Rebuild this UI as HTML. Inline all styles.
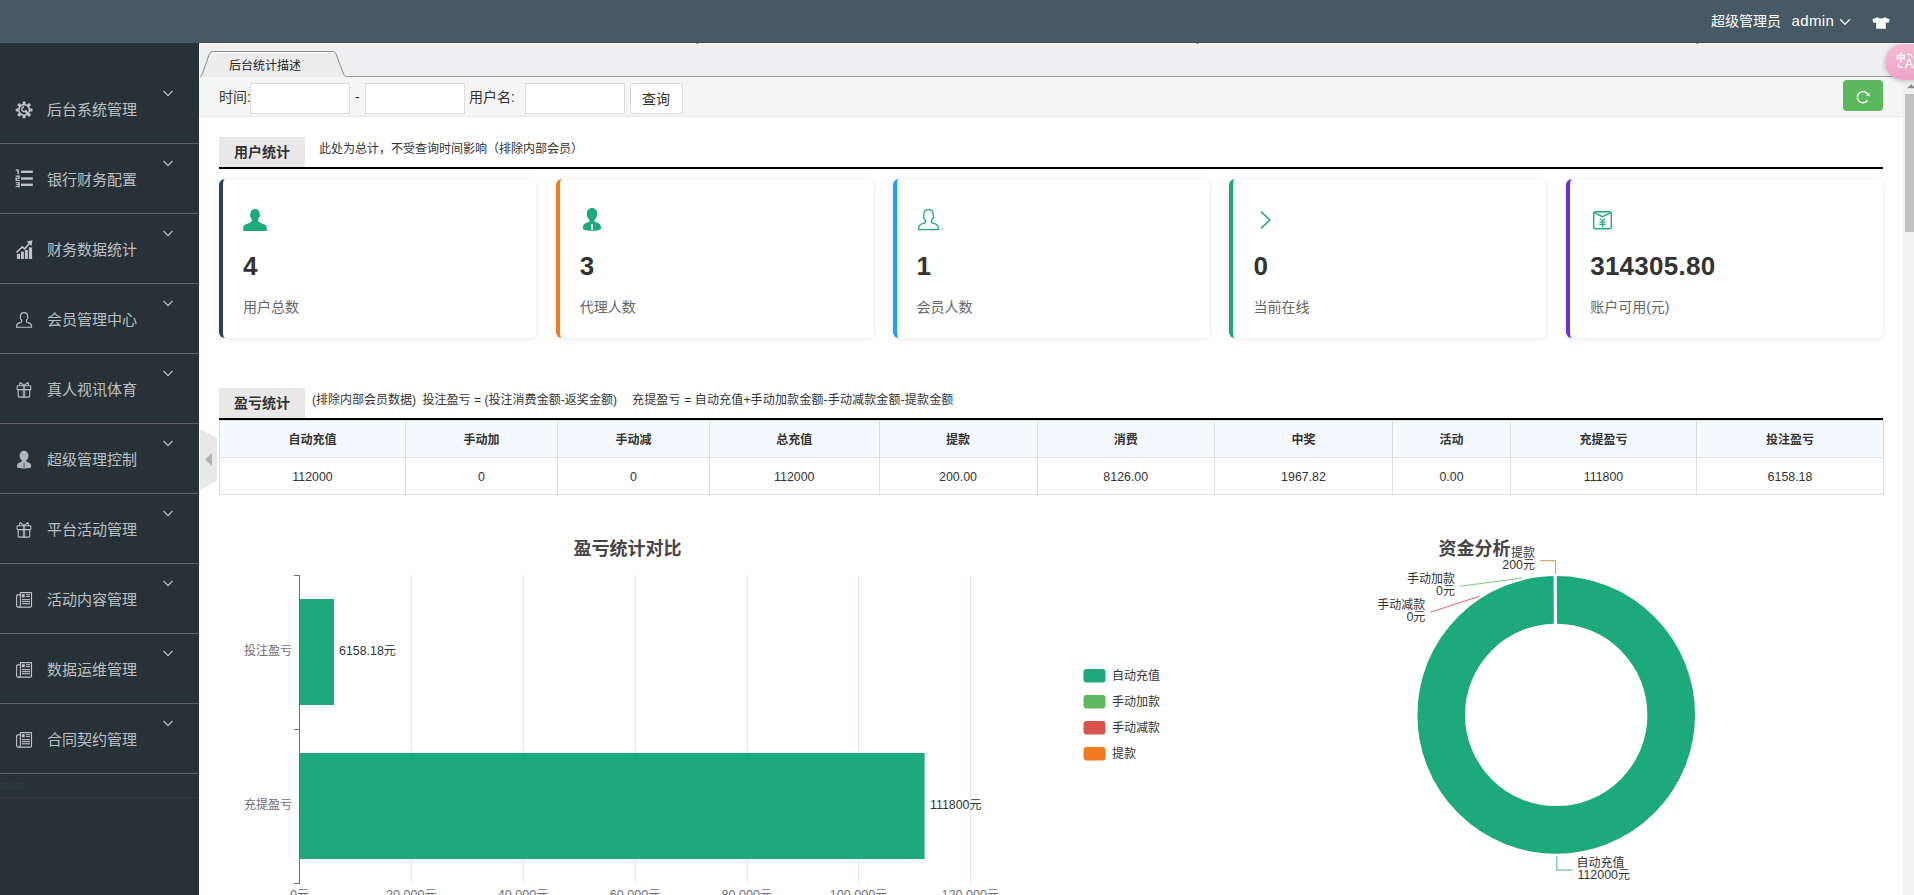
<!DOCTYPE html>
<html lang="zh-CN">
<head>
<meta charset="utf-8">
<title>后台统计描述</title>
<style>
*{box-sizing:border-box;margin:0;padding:0}
html,body{width:1914px;height:895px;overflow:hidden;background:#fff}
body{position:relative;font-family:"Liberation Sans","Noto Sans CJK SC",sans-serif;font-size:14px;color:#333}
.abs{position:absolute}
#header{left:0;top:0;width:1914px;height:43px;background:#455a64}
#side{left:0;top:43px;width:199px;height:852px;background:#263238}
.mi{position:absolute;left:0;width:199px;height:70px;border-bottom:1px solid #626262}
.mi .tx{position:absolute;left:47px;top:25px;font-size:15px;line-height:22px;color:rgba(255,255,255,.7);white-space:nowrap}
.mi svg.ic{position:absolute;left:0;top:0;width:48px;height:70px}
.mi svg.ch{position:absolute;left:162px;top:15px;width:12px;height:9px}
#tabbar{left:199px;top:43px;width:1715px;height:34px;background:#efeff1}
#toolbar{left:199px;top:77px;width:1705px;height:40px;background:#f5f5f5;border-bottom:1px solid #e6e6e6}
.inp{position:absolute;top:83px;width:100px;height:31px;background:#fff;border:1px solid #ddd}
.lbl{position:absolute;font-size:14px;line-height:20px;color:#333;white-space:nowrap}
.sec{position:absolute;left:219px;width:1664px;height:32px;border-bottom:2px solid #000}
.sec .t{position:absolute;left:0;top:0;width:86px;height:30px;background:#e8e8e8;font-weight:bold;font-size:14px;line-height:30px;color:#333;text-align:center}
.sec .d{position:absolute;font-size:12px;line-height:16px;color:#333;white-space:pre}
.card{position:absolute;top:179px;width:316.8px;height:159px;background:#fff;border-left:4px solid #2f4056;border-radius:6px;box-shadow:0 1px 6px rgba(0,0,0,.09)}
.card .n{position:absolute;left:20px;top:71px;letter-spacing:.25px;font-size:26px;line-height:32px;font-weight:bold;color:#333;white-space:nowrap}
.card .l{position:absolute;left:20px;top:118px;font-size:14px;line-height:20px;color:#666;white-space:nowrap}
.card svg{position:absolute;left:20px;top:29px;width:24px;height:24px;overflow:visible}
table{position:absolute;left:219px;top:420px;width:1664px;border-collapse:collapse;table-layout:fixed;font-size:12px}
td,th{border:1px solid #ddd;text-align:center;color:#333;height:37px;padding:0}
td{font-size:12.4px;padding-top:2px}
th{background:#f5fafe;font-weight:bold;padding-bottom:2px}
svg text{font-family:"Liberation Sans","Noto Sans CJK SC",sans-serif}
</style>
</head>
<body>
<div id="header" class="abs"></div>
<div class="abs lbl" style="left:1711px;top:11px;color:#fff">超级管理员</div>
<div class="abs lbl" style="left:1791.5px;top:11px;color:#fff;font-size:15px;letter-spacing:.35px">admin</div>
<svg class="abs" style="left:1838px;top:17px" width="14" height="10" viewBox="0 0 14 10"><path d="M2.2 2.2 L7 7.4 L11.8 2.2" fill="none" stroke="#fff" stroke-width="1.3"/></svg>
<svg class="abs" style="left:1871px;top:16px" width="20" height="14" viewBox="0 0 20 14"><path d="M6.2 1.2 L1.2 3.6 L2.6 7 L5.2 6.2 L5.2 12.8 L14.8 12.8 L14.8 6.2 L17.4 7 L18.8 3.6 L13.8 1.2 Q10 3.6 6.2 1.2 Z" fill="#fff"/></svg>
<div id="side" class="abs"></div>
<div class="mi" style="top:74px"><svg class="ic" viewBox="0 0 48 70"><g fill="#bfc3c5"><rect x="22.60" y="27.50" width="3.0" height="3.2" rx="0.6" transform="rotate(0 24.10 35.90)"/><rect x="22.60" y="27.50" width="3.0" height="3.2" rx="0.6" transform="rotate(45 24.10 35.90)"/><rect x="22.60" y="27.50" width="3.0" height="3.2" rx="0.6" transform="rotate(90 24.10 35.90)"/><rect x="22.60" y="27.50" width="3.0" height="3.2" rx="0.6" transform="rotate(135 24.10 35.90)"/><rect x="22.60" y="27.50" width="3.0" height="3.2" rx="0.6" transform="rotate(180 24.10 35.90)"/><rect x="22.60" y="27.50" width="3.0" height="3.2" rx="0.6" transform="rotate(225 24.10 35.90)"/><rect x="22.60" y="27.50" width="3.0" height="3.2" rx="0.6" transform="rotate(270 24.10 35.90)"/><rect x="22.60" y="27.50" width="3.0" height="3.2" rx="0.6" transform="rotate(315 24.10 35.90)"/></g><circle cx="24.10" cy="35.90" r="5.3" fill="none" stroke="#bfc3c5" stroke-width="1.6"/><path d="M24 33 A2.3 2.3 0 1 0 26.300 36" fill="none" stroke="#bfc3c5" stroke-width="1.4"/><path d="M25 36.800 L29.900 41.600" fill="none" stroke="#bfc3c5" stroke-width="2.2"/></svg><span class="tx">后台系统管理</span><svg class="ch" viewBox="0 0 12 9"><path d="M1.6 2 L6 6.6 L10.4 2" fill="none" stroke="#c3c7c9" stroke-width="1.1"/></svg></div>
<div class="mi" style="top:144px"><svg class="ic" viewBox="0 0 48 70"><g fill="#bfc3c5"><rect x="21" y="26.600" width="11.8" height="2.4"/><rect x="21" y="33.300" width="11.8" height="2.4"/><rect x="21" y="39.600" width="11.8" height="2.4"/><rect x="17.3" y="25.4" width="1.600" height="4.6"/><rect x="15.8" y="25.4" width="2" height="1.3"/><rect x="15.6" y="31.5" width="4" height="1.2"/><rect x="18.3" y="31.5" width="1.3" height="2.7"/><rect x="15.600" y="33.600" width="4" height="1.1"/><rect x="15.600" y="33.600" width="1.3" height="2.7"/><rect x="15.600" y="35.800" width="4" height="1.2"/><rect x="15.600" y="38.2" width="4" height="1.1"/><rect x="16.2" y="40.1" width="3.4" height="1.1"/><rect x="15.600" y="42.1" width="4" height="1.1"/><rect x="18.3" y="38.2" width="1.3" height="5"/></g></svg><span class="tx">银行财务配置</span><svg class="ch" viewBox="0 0 12 9"><path d="M1.6 2 L6 6.6 L10.4 2" fill="none" stroke="#c3c7c9" stroke-width="1.1"/></svg></div>
<div class="mi" style="top:214px"><svg class="ic" viewBox="0 0 48 70"><g fill="#bfc3c5"><rect x="16.9" y="39.9" width="3.1" height="5.1"/><rect x="20.9" y="37.600" width="3" height="7.4"/><rect x="24.9" y="35.9" width="3" height="9.1"/><rect x="28.9" y="33.4" width="3.2" height="11.6"/><path d="M32.5 26.2 L26.700 27.5 L28.600 29.300 L24.700 33.800 L22.300 31.800 L15.900 38 L17 39.100 L22.300 34.100 L24.700 36.100 L29.700 30.400 L31.500 32.100 Z"/></g></svg><span class="tx">财务数据统计</span><svg class="ch" viewBox="0 0 12 9"><path d="M1.6 2 L6 6.6 L10.4 2" fill="none" stroke="#c3c7c9" stroke-width="1.1"/></svg></div>
<div class="mi" style="top:284px"><svg class="ic" viewBox="0 0 48 70"><path d="M24.05 28.65 C26.4 28.65 27.6 30.1 27.6 32 C27.6 32.900 27.9 33.200 27.9 33.800 C27.9 34.800 26.3 35.700 26.3 37.1 C26.3 38.300 27.300 38.700 28.500 38.900 C30.600 39.300 31.650 40.900 31.650 43.25 L16.45 43.25 C16.45 40.900 17.500 39.300 19.600 38.900 C20.800 38.700 21.800 38.300 21.800 37.1 C21.800 35.700 20.200 34.800 20.200 33.800 C20.200 33.200 20.500 32.900 20.500 32 C20.500 30.100 21.700 28.65 24.05 28.65 Z" fill="none" stroke="#bfc3c5" stroke-width="1.15" stroke-linejoin="round"/></svg><span class="tx">会员管理中心</span><svg class="ch" viewBox="0 0 12 9"><path d="M1.6 2 L6 6.6 L10.4 2" fill="none" stroke="#c3c7c9" stroke-width="1.1"/></svg></div>
<div class="mi" style="top:354px"><svg class="ic" viewBox="0 0 48 70"><g fill="none" stroke="#bfc3c5" stroke-width="1.1" stroke-linejoin="round"><rect x="17.1" y="31.800" width="13.7" height="3.800" rx="0.7"/><path d="M18.2 35.400 V42 Q18.2 43.100 19.300 43.100 H28.600 Q29.700 43.100 29.700 42 V35.400"/><path d="M23.300 31.600 V43.100 M24.700 31.600 V43.100" stroke-width="0.9"/><path d="M24 31.500 L20 28.500 L19.400 31.400 M24 31.500 L28 28.500 L28.600 31.400"/></g></svg><span class="tx">真人视讯体育</span><svg class="ch" viewBox="0 0 12 9"><path d="M1.6 2 L6 6.6 L10.4 2" fill="none" stroke="#c3c7c9" stroke-width="1.1"/></svg></div>
<div class="mi" style="top:424px"><svg class="ic" viewBox="0 0 48 70"><path d="M24.05 26.7 C26.700 26.7 28.500 28.800 28.500 31.600 C28.700 33.800 27.600 35.600 26.200 36.600 C26.100 37.600 26.900 38.100 28.300 38.400 C30.400 38.900 31.200 40 31.200 42.800 C31.200 43.700 28.500 44.500 24.050 44.500 C19.600 44.500 16.900 43.700 16.900 42.800 C16.900 40 17.700 38.900 19.800 38.400 C21.200 38.100 22 37.600 21.900 36.600 C20.500 35.600 19.600 33.800 19.600 31.600 C19.600 28.800 21.400 26.700 24.050 26.700 Z" fill="#b0b5b9"/><rect x="23.5" y="39.2" width="1.2" height="4.300" fill="#59646a"/></svg><span class="tx">超级管理控制</span><svg class="ch" viewBox="0 0 12 9"><path d="M1.6 2 L6 6.6 L10.4 2" fill="none" stroke="#c3c7c9" stroke-width="1.1"/></svg></div>
<div class="mi" style="top:494px"><svg class="ic" viewBox="0 0 48 70"><g fill="none" stroke="#bfc3c5" stroke-width="1.1" stroke-linejoin="round"><rect x="17.1" y="31.800" width="13.7" height="3.800" rx="0.7"/><path d="M18.2 35.400 V42 Q18.2 43.100 19.300 43.100 H28.600 Q29.700 43.100 29.700 42 V35.400"/><path d="M23.300 31.600 V43.100 M24.700 31.600 V43.100" stroke-width="0.9"/><path d="M24 31.500 L20 28.500 L19.400 31.400 M24 31.500 L28 28.500 L28.600 31.400"/></g></svg><span class="tx">平台活动管理</span><svg class="ch" viewBox="0 0 12 9"><path d="M1.6 2 L6 6.6 L10.4 2" fill="none" stroke="#c3c7c9" stroke-width="1.1"/></svg></div>
<div class="mi" style="top:564px"><svg class="ic" viewBox="0 0 48 70"><g fill="none" stroke="#bfc3c5" stroke-width="1.1" stroke-linejoin="round"><path d="M20.400 28.600 H31.500 V42 Q31.500 43.100 30.400 43.100 H18 Q16.600 43.100 16.600 41.700 V31.900 Q16.600 30.900 17.600 30.900 H20.400 Z"/><path d="M20.400 30.900 V41.400 Q20.400 43 18.800 43.100"/></g><g fill="#bfc3c5"><rect x="21.800" y="30.200" width="2.900" height="3.100"/><rect x="25.9" y="30.200" width="4.100" height="1"/><rect x="25.9" y="32.1" width="4.100" height="1"/><rect x="21.800" y="35.100" width="8.200" height="1.1"/><rect x="21.800" y="37.100" width="8.200" height="1.1"/><rect x="21.800" y="39.200" width="8.200" height="1.1"/></g></svg><span class="tx">活动内容管理</span><svg class="ch" viewBox="0 0 12 9"><path d="M1.6 2 L6 6.6 L10.4 2" fill="none" stroke="#c3c7c9" stroke-width="1.1"/></svg></div>
<div class="mi" style="top:634px"><svg class="ic" viewBox="0 0 48 70"><g fill="none" stroke="#bfc3c5" stroke-width="1.1" stroke-linejoin="round"><path d="M20.400 28.600 H31.500 V42 Q31.500 43.100 30.400 43.100 H18 Q16.600 43.100 16.600 41.700 V31.900 Q16.600 30.900 17.600 30.900 H20.400 Z"/><path d="M20.400 30.900 V41.400 Q20.400 43 18.800 43.100"/></g><g fill="#bfc3c5"><rect x="21.800" y="30.200" width="2.900" height="3.100"/><rect x="25.9" y="30.200" width="4.100" height="1"/><rect x="25.9" y="32.1" width="4.100" height="1"/><rect x="21.800" y="35.100" width="8.200" height="1.1"/><rect x="21.800" y="37.100" width="8.200" height="1.1"/><rect x="21.800" y="39.200" width="8.200" height="1.1"/></g></svg><span class="tx">数据运维管理</span><svg class="ch" viewBox="0 0 12 9"><path d="M1.6 2 L6 6.6 L10.4 2" fill="none" stroke="#c3c7c9" stroke-width="1.1"/></svg></div>
<div class="mi" style="top:704px"><svg class="ic" viewBox="0 0 48 70"><g fill="none" stroke="#bfc3c5" stroke-width="1.1" stroke-linejoin="round"><path d="M20.400 28.600 H31.500 V42 Q31.500 43.100 30.400 43.100 H18 Q16.600 43.100 16.600 41.700 V31.900 Q16.600 30.900 17.600 30.900 H20.400 Z"/><path d="M20.400 30.900 V41.400 Q20.400 43 18.800 43.100"/></g><g fill="#bfc3c5"><rect x="21.800" y="30.200" width="2.900" height="3.100"/><rect x="25.9" y="30.200" width="4.100" height="1"/><rect x="25.9" y="32.1" width="4.100" height="1"/><rect x="21.800" y="35.100" width="8.200" height="1.1"/><rect x="21.800" y="37.100" width="8.200" height="1.1"/><rect x="21.800" y="39.200" width="8.200" height="1.1"/></g></svg><span class="tx">合同契约管理</span><svg class="ch" viewBox="0 0 12 9"><path d="M1.6 2 L6 6.6 L10.4 2" fill="none" stroke="#c3c7c9" stroke-width="1.1"/></svg></div>
<div class="abs" style="left:-1px;top:777px;font-size:10.5px;line-height:16px;color:#303c42">sssss</div>
<div class="abs" style="left:0;top:797px;width:199px;height:1px;background:#2f3b41"></div>
<div id="tabbar" class="abs"></div>
<div class="abs" style="left:346px;top:76px;width:1568px;height:1px;background:#9a9a9a"></div>
<svg class="abs" style="left:199px;top:43px" width="160" height="34" viewBox="0 0 160 34"><path d="M0.5 33.900 C2.500 33.500 3 31.500 3.600 30 L10.200 11.600 C11 9.400 12.400 8.500 14.600 8.500 L132.800 8.500 C135.200 8.500 136.500 9.400 137.300 11.600 L144.200 30.200 C145 32.400 145.800 33.500 148 33.500 L148 34 L0.5 34 Z" fill="#ededed"/><path d="M14 9.500 L133.500 9.500" stroke="#fbfbfb" stroke-width="1" fill="none"/><path d="M0.5 33.900 C2.500 33.500 3 31.500 3.600 30 L10.200 11.600 C11 9.400 12.400 8.500 14.600 8.500 L132.800 8.500 C135.200 8.500 136.500 9.400 137.300 11.600 L144.200 30.200 C145 32.400 145.800 33.500 148 33.500" fill="none" stroke="#8c8c8c" stroke-width="1"/></svg>
<div class="abs" style="left:229px;top:58px;font-size:12px;line-height:16px;color:#222;white-space:nowrap">后台统计描述</div>
<div class="abs" style="left:199px;top:42px;width:1715px;height:1px;background:#3d515c"></div>
<div class="abs" style="left:199px;top:43px;width:1715px;height:1px;background:#fbfbfb"></div>
<div class="abs" style="left:199px;top:43px;width:1px;height:74px;background:#fbfbfb"></div>
<div class="abs" style="left:696px;top:43px;width:3px;height:1px;background:#a5a5a5"></div>
<div class="abs" style="left:1196px;top:43px;width:3px;height:1px;background:#a5a5a5"></div>
<div class="abs" style="left:1696px;top:43px;width:3px;height:1px;background:#a5a5a5"></div>
<div id="toolbar" class="abs"></div>
<div class="lbl" style="left:219px;top:87px">时间:</div>
<div class="inp" style="left:250px"></div>
<div class="lbl" style="left:355px;top:87px">-</div>
<div class="inp" style="left:365px"></div>
<div class="lbl" style="left:469px;top:87px">用户名:</div>
<div class="inp" style="left:525px"></div>
<div class="abs" style="left:630px;top:83px;width:53px;height:31px;background:#fff;border:1px solid #ddd;border-radius:4px"></div>
<div class="lbl" style="left:642px;top:89px">查询</div>
<div class="abs" style="left:1843px;top:80px;width:40px;height:31px;background:#5cb85c;border-radius:4px"></div>
<svg class="abs" style="left:1853px;top:87px" width="20" height="20" viewBox="1853 87 20 20"><path d="M1868.300 95.400 A5.600 5.600 0 1 0 1867.600 100.300" fill="none" stroke="#fff" stroke-width="1.3"/><path d="M1866 95.200 L1869.900 96.600 L1869.500 92.600 Z" fill="#fff"/></svg>
<div class="abs" style="left:1903px;top:77px;width:11px;height:818px;background:#f1f1f1"></div>
<div class="abs" style="left:1905px;top:94px;width:9px;height:138px;background:#c1c1c1"></div>
<svg class="abs" style="left:1905px;top:82px" width="9" height="8" viewBox="0 0 9 8"><path d="M2.2 6.2 L6.2 2.2 L10.2 6.2 Z" fill="#8a8a8a"/></svg>
<div class="abs" style="left:1885px;top:44px;width:60px;height:36px;border-radius:18px;background:linear-gradient(#f6b8d2,#efa1c4);opacity:.93;box-shadow:0 1px 5px rgba(0,0,0,.22)"></div>
<div class="abs" style="left:1896px;top:51px;font-size:9.5px;font-weight:500;-webkit-text-stroke:.35px #fff;line-height:13px;color:#fff;white-space:nowrap">中</div>
<div class="abs" style="left:1905px;top:56px;font-size:12.5px;-webkit-text-stroke:.3px #fff;line-height:16px;color:#fff;white-space:nowrap">A</div>
<svg class="abs" style="left:1894px;top:50px" width="20" height="22" viewBox="1894 50 20 22"><path d="M1907.4 54.300 Q1911.600 53.600 1912.200 57.800" fill="none" stroke="#fff" stroke-width="1.3"/><path d="M1898.200 63.800 Q1898.400 67.800 1902.600 67.400" fill="none" stroke="#fff" stroke-width="1.3"/></svg>
<div class="sec" style="top:137px"><div class="t">用户统计</div><div class="d" style="left:100px;top:4px">此处为总计，不受查询时间影响（排除内部会员）</div></div>
<div class="card" style="left:219px;border-left-color:#2f4056"><svg viewBox="0 0 24 24"><path d="M12 1 C14.9 1 16.6 2.8 16.6 5.6 C16.6 6.6 17 7 17 7.8 C17 9 15.2 10.4 15 12 C14.8 13.8 16.4 14.4 18.6 15.2 C21.6 16.3 23.8 17.2 23.8 20 L23.8 23 L0.2 23 L0.2 20 C0.2 17.2 2.4 16.3 5.4 15.2 C7.6 14.4 9.2 13.8 9 12 C8.8 10.4 7 9 7 7.8 C7 7 7.4 6.6 7.4 5.6 C7.4 2.8 9.1 1 12 1 Z" fill="#1ca97b"/></svg><div class="n">4</div><div class="l">用户总数</div></div>
<div class="card" style="left:555.8px;border-left-color:#f37b1d"><svg viewBox="0 0 24 24"><path d="M12 0 C15.2 0 17.2 2.4 17.2 5.8 C17.2 8.6 16 10.8 14.4 12 C14.2 13.4 15.2 14.2 17.2 14.8 C20 15.6 21 17 21 20.6 C21 21.8 17.6 23 12 23 C6.4 23 3 21.8 3 20.6 C3 17 4 15.6 6.8 14.8 C8.800 14.2 9.8 13.4 9.6 12 C8 10.8 6.8 8.600 6.8 5.8 C6.8 2.4 8.800 0 12 0 Z" fill="#1ca97b"/><rect x="11.1" y="16" width="1.8" height="6" fill="#fff"/></svg><div class="n">3</div><div class="l">代理人数</div></div>
<div class="card" style="left:892.6px;border-left-color:#1e9fff"><svg viewBox="0 0 24 24"><g transform="translate(-20 -37.67) scale(1.31 1.37)"><path d="M24.05 28.65 C26.4 28.65 27.6 30.1 27.6 32 C27.6 32.900 27.9 33.200 27.9 33.800 C27.9 34.800 26.3 35.700 26.3 37.1 C26.3 38.300 27.300 38.700 28.500 38.900 C30.600 39.300 31.650 40.900 31.650 43.25 L16.45 43.25 C16.45 40.900 17.500 39.300 19.600 38.900 C20.800 38.700 21.800 38.300 21.800 37.1 C21.800 35.700 20.200 34.800 20.200 33.800 C20.200 33.200 20.500 32.900 20.500 32 C20.500 30.100 21.700 28.65 24.05 28.65 Z" fill="none" stroke="#1ca97b" stroke-width="1.0" stroke-linejoin="round"/></g></svg><div class="n">1</div><div class="l">会员人数</div></div>
<div class="card" style="left:1229.4px;border-left-color:#19a97b"><svg viewBox="0 0 24 24"><path d="M8 3.6 L16.800 12 L8 20.4" fill="none" stroke="#1ca97b" stroke-width="1.5"/></svg><div class="n">0</div><div class="l">当前在线</div></div>
<div class="card" style="left:1566.2px;border-left-color:#6f2cd8"><svg viewBox="0 0 24 24"><g fill="none" stroke="#1ca97b" stroke-width="1.4"><rect x="3.700" y="3.700" width="17.6" height="17" rx="2"/><path d="M4.2 4.6 L12.5 8.6 L20.8 4.6"/><path d="M9.8 10.600 L12.5 12.800 L15.2 10.600 M12.5 12.800 V19.4 M9.4 14.2 H15.600 M9.4 16.4 H15.600" stroke-width="1.2"/></g></svg><div class="n">314305.80</div><div class="l">账户可用(元)</div></div>
<div class="sec" style="top:388px"><div class="t">盈亏统计</div><div class="d" style="left:93px;top:4px">(排除内部会员数据)</div><div class="d" style="left:203.400px;top:4px;letter-spacing:.05px">投注盈亏 = (投注消费金额-返奖金额)</div><div class="d" style="left:413px;top:4px;letter-spacing:.16px">充提盈亏 = 自动充值+手动加款金额-手动减款金额-提款金额</div></div>
<table><colgroup><col style="width:186px"><col style="width:152px"><col style="width:152px"><col style="width:169.5px"><col style="width:158.0px"><col style="width:177.5px"><col style="width:178px"><col style="width:118px"><col style="width:186px"><col style="width:187px"></colgroup>
<tr><th>自动充值</th><th>手动加</th><th>手动减</th><th>总充值</th><th>提款</th><th>消费</th><th>中奖</th><th>活动</th><th>充提盈亏</th><th>投注盈亏</th></tr>
<tr><td>112000</td><td>0</td><td>0</td><td>112000</td><td>200.00</td><td>8126.00</td><td>1967.82</td><td>0.00</td><td>111800</td><td>6158.18</td></tr></table>
<svg class="abs" style="left:199px;top:428px" width="20" height="64" viewBox="0 0 20 64"><path d="M1 1 L18 10 L18 53 L1 62 Z" fill="#e8e8e8"/><path d="M6 31.500 L13 25 L13 38 Z" fill="#b3b3b3"/></svg>
<svg class="abs" style="left:199px;top:520px" width="900" height="375" viewBox="199 520 900 375"><path d="M411.5 575 V883" stroke="#e0e6f1" stroke-width="1" fill="none"/><path d="M523.5 575 V883" stroke="#e0e6f1" stroke-width="1" fill="none"/><path d="M635.5 575 V883" stroke="#e0e6f1" stroke-width="1" fill="none"/><path d="M747.5 575 V883" stroke="#e0e6f1" stroke-width="1" fill="none"/><path d="M858.5 575 V883" stroke="#e0e6f1" stroke-width="1" fill="none"/><path d="M970.5 575 V883" stroke="#e0e6f1" stroke-width="1" fill="none"/><path d="M299.5 575 V883.5 M294 575.5 H299.5 M294 729.500 H299.5 M294 883.5 H300" stroke="#6e7079" stroke-width="1" fill="none"/><rect x="300" y="599" width="34" height="106" fill="#1ca97b"/><rect x="300" y="753" width="624.600" height="106" fill="#1ca97b"/><text x="627.500" y="554.500" font-size="18" font-weight="bold" fill="#464646" text-anchor="middle">盈亏统计对比</text><text x="292" y="654.500" font-size="12" fill="#6e7079" text-anchor="end">投注盈亏</text><text x="292" y="808.5" font-size="12" fill="#6e7079" text-anchor="end">充提盈亏</text><text x="339" y="654.500" font-size="12" fill="#333"><tspan font-size="12.4">6158.18</tspan>元</text><text x="930" y="808.5" font-size="12" fill="#333"><tspan font-size="12.4">111800</tspan>元</text><text x="299.5" y="899" font-size="12" fill="#6e7079" text-anchor="middle"><tspan font-size="12.6">0</tspan>元</text><text x="411.3" y="899" font-size="12" fill="#6e7079" text-anchor="middle"><tspan font-size="12.6">20,000</tspan>元</text><text x="523.1" y="899" font-size="12" fill="#6e7079" text-anchor="middle"><tspan font-size="12.6">40,000</tspan>元</text><text x="634.9" y="899" font-size="12" fill="#6e7079" text-anchor="middle"><tspan font-size="12.6">60,000</tspan>元</text><text x="746.7" y="899" font-size="12" fill="#6e7079" text-anchor="middle"><tspan font-size="12.6">80,000</tspan>元</text><text x="858.5" y="899" font-size="12" fill="#6e7079" text-anchor="middle"><tspan font-size="12.6">100,000</tspan>元</text><text x="970.3" y="899" font-size="12" fill="#6e7079" text-anchor="middle"><tspan font-size="12.6">120,000</tspan>元</text></svg>
<svg class="abs" style="left:1060px;top:520px" width="843" height="375" viewBox="1060 520 843 375"><circle cx="1556.2" cy="714.9" r="115.0" fill="none" stroke="#1ca97b" stroke-width="47.60000000000001"/><path d="M1555.2 575 L1555.4 624.500" stroke="#fff" stroke-width="3.2" fill="none"/><text x="1474.5" y="554.500" font-size="18" font-weight="bold" fill="#464646" text-anchor="middle">资金分析</text><rect x="1083.5" y="669.0" width="22" height="13.5" rx="3" fill="#1ca97b"/><text x="1112" y="679.5" font-size="12" fill="#333">自动充值</text><rect x="1083.5" y="695.0" width="22" height="13.5" rx="3" fill="#5fb95f"/><text x="1112" y="705.5" font-size="12" fill="#333">手动加款</text><rect x="1083.5" y="721.0" width="22" height="13.5" rx="3" fill="#d9534f"/><text x="1112" y="731.5" font-size="12" fill="#333">手动减款</text><rect x="1083.5" y="747.0" width="22" height="13.5" rx="3" fill="#f37b1d"/><text x="1112" y="757.5" font-size="12" fill="#333">提款</text><path d="M1540 560.5 H1555.5 V574" stroke="#f39a55" stroke-width="1" fill="none"/><text x="1535" y="557" font-size="12" fill="#333" text-anchor="end">提款</text><text x="1535" y="569" font-size="12" fill="#333" text-anchor="end"><tspan font-size="12.4">200</tspan>元</text><path d="M1460 586.200 L1522 578" stroke="#7fc77f" stroke-width="1.1" fill="none"/><text x="1455" y="583" font-size="12" fill="#333" text-anchor="end">手动加款</text><text x="1455" y="595" font-size="12" fill="#333" text-anchor="end"><tspan font-size="12.4">0</tspan>元</text><path d="M1430.300 612.300 L1479.700 596.200" stroke="#e2706c" stroke-width="1.1" fill="none"/><text x="1425.300" y="609" font-size="12" fill="#333" text-anchor="end">手动减款</text><text x="1425.300" y="621" font-size="12" fill="#333" text-anchor="end"><tspan font-size="12.4">0</tspan>元</text><path d="M1556.700 856 V870 H1572" stroke="#7fd0b4" stroke-width="1.5" fill="none"/><text x="1576.500" y="867" font-size="12" fill="#333">自动充值</text><text x="1577.500" y="879" font-size="12" fill="#333"><tspan font-size="12.4">112000</tspan>元</text></svg>
</body>
</html>
